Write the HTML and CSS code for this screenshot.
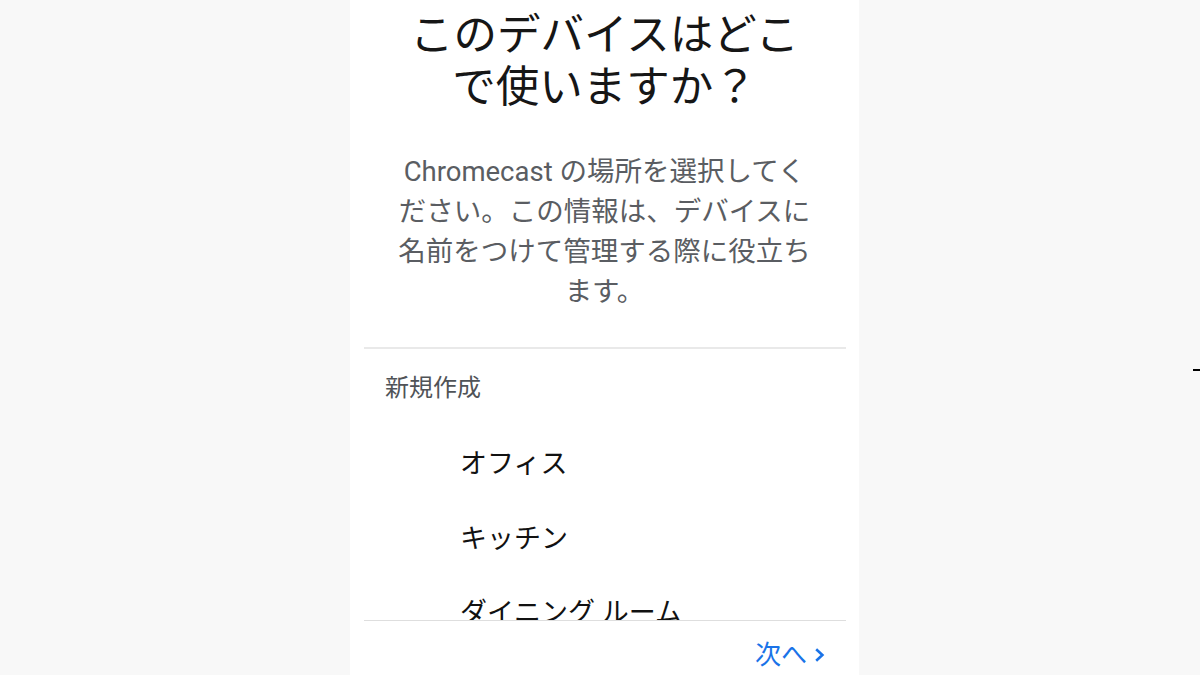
FILE: index.html
```html
<!DOCTYPE html>
<html lang="ja">
<head>
<meta charset="utf-8">
<title>このデバイスはどこで使いますか？</title>
<link rel="stylesheet" href="styles.css">
</head>
<body>
<div class="stage">
  <main class="phone">
    <section class="intro">
      <h1 class="title">このデバイスはどこで使いますか？</h1>
      <p class="desc">Chromecast の場所を選択してください。この情報は、デバイスに名前をつけて管理する際に役立ちます。</p>
    </section>
    <div class="divider"></div>
    <section class="rooms">
      <h2 class="rooms-head">新規作成</h2>
      <ul class="room-list">
        <li class="room">オフィス</li>
        <li class="room">キッチン</li>
        <li class="room">ダイニング ルーム</li>
      </ul>
    </section>
    <footer class="footer">
      <button class="next">次へ
        <svg class="chev" viewBox="0 0 11 14" width="11" height="14" aria-hidden="true"><path d="M2.2 1.2 L8.4 7 L2.2 12.8" fill="none" stroke="#1a73e8" stroke-width="2.6"/></svg>
      </button>
    </footer>
  </main>
</div>
<span class="mark"></span>
</body>
</html>
```

FILE: styles.css
```css
* { box-sizing: border-box; }
html, body { margin: 0; padding: 0; }
body {
  width: 1200px;
  height: 675px;
  overflow: hidden;
  background: #f8f8f8;
  font-family: Roboto, "Noto Sans CJK JP", "Noto Sans", sans-serif;
  position: relative;
}
.stage {
  display: flex;
  padding-left: 350px;
}
.phone {
  width: 509px;
  height: 675px;
  background: #ffffff;
  overflow: hidden;
  display: flex;
  flex-direction: column;
}
.phone > * { flex: none; }
.intro {
  display: flex;
  flex-direction: column;
  align-items: center;
  padding-top: 10px;
}
.title {
  width: 420px;
  margin: 0;
  font-size: 43.5px;
  line-height: 52px;
  font-weight: 400;
  color: #161616;
  text-align: center;
}
.desc {
  width: 420px;
  margin: 38px 0 0;
  font-size: 27.5px;
  line-height: 40px;
  color: #5a5d62;
  text-align: center;
}
.divider {
  margin: 35px 13px 0 14px;
  height: 2px;
  background: #e9e9e9;
}
.rooms {
  height: 271px;
  overflow: hidden;
}
.rooms-head {
  margin: 24px 0 0 35px;
  font-size: 24px;
  line-height: 30px;
  font-weight: 400;
  color: #505357;
}
.room-list {
  list-style: none;
  margin: 24px 0 0;
  padding: 0 0 0 110px;
}
.room {
  height: 74.5px;
  line-height: 74.5px;
  font-size: 27px;
  color: #111111;
  white-space: nowrap;
}
.footer {
  margin: 0 13px 0 14px;
  border-top: 1.5px solid #dedede;
  display: flex;
  justify-content: flex-end;
  align-items: flex-start;
  padding: 20px 21px 0 0;
  height: 54px;
}
.next {
  display: flex;
  align-items: center;
  gap: 7px;
  border: 0;
  background: none;
  padding: 0;
  font-family: inherit;
  font-size: 26px;
  line-height: 28px;
  color: #1a73e8;
}
.chev { display: block; }
.mark {
  position: absolute;
  left: 1193px;
  top: 369px;
  width: 7px;
  height: 2px;
  background: #000;
}
```
